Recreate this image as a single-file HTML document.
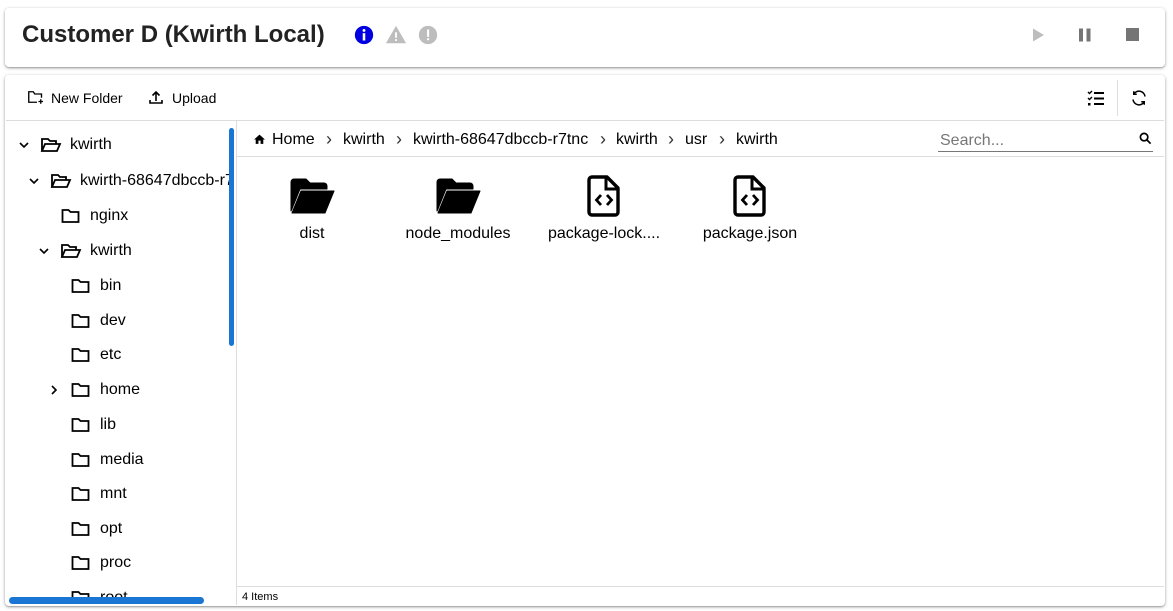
<!DOCTYPE html>
<html><head><meta charset="utf-8"><style>
*{box-sizing:border-box;margin:0;padding:0}
body{width:1173px;height:611px;background:#fff;font-family:"Liberation Sans",Arial,sans-serif;color:#000;position:relative;overflow:hidden}
.card{position:absolute;background:#fff;border-radius:4px;box-shadow:0 1px 3px rgba(0,0,0,.35),0 1px 1px rgba(0,0,0,.14)}
.abs{position:absolute}
.t{position:absolute;font-size:16px;white-space:nowrap;line-height:18px}
.row svg{position:absolute}
.ch{position:absolute;font-size:18px;line-height:18px;color:#333}
</style></head><body>
<div class="card" style="left:5px;top:8px;width:1160px;height:59px"></div>
<div class="t" style="left:22px;top:21px;font-size:24px;line-height:28px;font-weight:bold;color:#222">Customer D (Kwirth Local)</div>
<svg class="abs" style="left:353px;top:24px" width="22" height="22" viewBox="0 0 24 24"><circle cx="12" cy="12" r="10" fill="#0000e0"/><rect x="10.6" y="10" width="2.8" height="8" fill="#fff"/><circle cx="12" cy="7" r="1.6" fill="#fff"/></svg>
<svg class="abs" style="left:385px;top:24px" width="22" height="22" viewBox="0 0 24 24"><path d="M1 21h22L12 2z" fill="#bdbdbd"/><rect x="11" y="9" width="2" height="6" fill="#fff"/><rect x="11" y="16.5" width="2" height="2" fill="#fff"/></svg>
<svg class="abs" style="left:417px;top:24px" width="22" height="22" viewBox="0 0 24 24"><circle cx="12" cy="12" r="10" fill="#bdbdbd"/><rect x="11" y="6" width="2.2" height="8" fill="#fff"/><rect x="11" y="15.5" width="2.2" height="2.2" fill="#fff"/></svg>
<svg class="abs" style="left:1030px;top:27px" width="16" height="16" viewBox="0 0 16 16"><path d="M3 1.5v13L14 8z" fill="#bdbdbd"/></svg>
<svg class="abs" style="left:1077px;top:27px" width="16" height="16" viewBox="0 0 16 16"><rect x="2" y="1.5" width="4" height="13" fill="#757575"/><rect x="9.5" y="1.5" width="4" height="13" fill="#757575"/></svg>
<svg class="abs" style="left:1126px;top:28px" width="14" height="14"><rect width="13" height="13" fill="#757575"/></svg>

<div class="card" style="left:5px;top:75px;width:1160px;height:531px"></div>
<div class="abs" style="left:6px;top:120px;width:1158px;height:1px;background:#ddd"></div>
<svg class="abs" style="left:26px;top:88px" width="19" height="18" viewBox="0 0 24 24" fill="none" stroke="#000" stroke-width="1.8"><path d="M20 13V8H11L9 5H3v14h11"/><path d="M19 15v6M16 18h6"/></svg>
<div class="t" style="left:51px;top:89px;font-size:14px">New Folder</div>
<svg class="abs" style="left:148px;top:89px" width="16" height="16" viewBox="0 0 16 16" fill="none" stroke="#000" stroke-width="1.6"><path d="M8 12V3M4.5 6.5 8 3l3.5 3.5M2 11v3h12v-3"/></svg>
<div class="t" style="left:172px;top:89px;font-size:14px">Upload</div>
<svg class="abs" style="left:1086px;top:88px" width="20" height="20" viewBox="0 0 20 20"><path d="M2 4l1.5 1.5L6 3M2 10l1.5 1.5L6 9" stroke="#000" stroke-width="1.4" fill="none"/><rect x="2" y="15" width="2.5" height="2.5" fill="#000"/><rect x="8" y="4" width="10" height="2" fill="#000"/><rect x="8" y="9.5" width="10" height="2" fill="#000"/><rect x="8" y="15" width="10" height="2" fill="#000"/></svg>
<div class="abs" style="left:1117px;top:80px;width:1px;height:36px;background:#ddd"></div>
<svg class="abs" style="left:1130px;top:89px" width="18" height="18" viewBox="0 0 24 24" fill="none" stroke="#000" stroke-width="2"><path d="M20 10A8 8 0 0 0 5 7M4 14a8 8 0 0 0 15 3"/><path d="M5 3v4h4M19 21v-4h-4"/></svg>

<div class="abs" style="left:236px;top:121px;width:1px;height:484px;background:#ddd"></div>
<div class="abs" style="left:6px;top:121px;width:223px;height:476px;overflow:hidden">
<div class="row" style="position:relative">
<svg style="left:12px;top:18px" width="12" height="12" viewBox="0 0 12 12"><path d="M2 4l4 4 4-4" stroke="#000" stroke-width="1.6" fill="none"/></svg>
<svg style="left:34px;top:15px" width="22" height="18" viewBox="0 0 22 18" fill="none" stroke="#000" stroke-width="1.8"><path d="M2 15V3h6l2 2h6v3"/><path d="M2 15l3-7h15l-3 7z"/></svg>
<div class="t" style="left:64px;top:15px">kwirth</div>
<svg style="left:22px;top:54px" width="12" height="12" viewBox="0 0 12 12"><path d="M2 4l4 4 4-4" stroke="#000" stroke-width="1.6" fill="none"/></svg>
<svg style="left:44px;top:51px" width="22" height="18" viewBox="0 0 22 18" fill="none" stroke="#000" stroke-width="1.8"><path d="M2 15V3h6l2 2h6v3"/><path d="M2 15l3-7h15l-3 7z"/></svg>
<div class="t" style="left:74px;top:51px">kwirth-68647dbccb-r7tnc</div>
<svg style="left:55px;top:87px" width="19" height="16" viewBox="0 0 19 16" fill="none" stroke="#000" stroke-width="1.8"><path d="M1.5 14V2h6l2 2h8v10z"/></svg>
<div class="t" style="left:84px;top:86px">nginx</div>
<svg style="left:32px;top:124px" width="12" height="12" viewBox="0 0 12 12"><path d="M2 4l4 4 4-4" stroke="#000" stroke-width="1.6" fill="none"/></svg>
<svg style="left:54px;top:121px" width="22" height="18" viewBox="0 0 22 18" fill="none" stroke="#000" stroke-width="1.8"><path d="M2 15V3h6l2 2h6v3"/><path d="M2 15l3-7h15l-3 7z"/></svg>
<div class="t" style="left:84px;top:121px">kwirth</div>
</div>
<svg class="abs" style="left:42px;top:263px" width="12" height="12" viewBox="0 0 12 12"><path d="M4 2l4 4-4 4" stroke="#000" stroke-width="1.6" fill="none"/></svg>
<svg class="abs" style="left:65px;top:157px" width="19" height="16" viewBox="0 0 19 16" fill="none" stroke="#000" stroke-width="1.8"><path d="M1.5 14V2h6l2 2h8v10z"/></svg>
<div class="t" style="left:94px;top:156px">bin</div>
<svg class="abs" style="left:65px;top:192px" width="19" height="16" viewBox="0 0 19 16" fill="none" stroke="#000" stroke-width="1.8"><path d="M1.5 14V2h6l2 2h8v10z"/></svg>
<div class="t" style="left:94px;top:191px">dev</div>
<svg class="abs" style="left:65px;top:226px" width="19" height="16" viewBox="0 0 19 16" fill="none" stroke="#000" stroke-width="1.8"><path d="M1.5 14V2h6l2 2h8v10z"/></svg>
<div class="t" style="left:94px;top:225px">etc</div>
<svg class="abs" style="left:65px;top:261px" width="19" height="16" viewBox="0 0 19 16" fill="none" stroke="#000" stroke-width="1.8"><path d="M1.5 14V2h6l2 2h8v10z"/></svg>
<div class="t" style="left:94px;top:260px">home</div>
<svg class="abs" style="left:65px;top:296px" width="19" height="16" viewBox="0 0 19 16" fill="none" stroke="#000" stroke-width="1.8"><path d="M1.5 14V2h6l2 2h8v10z"/></svg>
<div class="t" style="left:94px;top:295px">lib</div>
<svg class="abs" style="left:65px;top:331px" width="19" height="16" viewBox="0 0 19 16" fill="none" stroke="#000" stroke-width="1.8"><path d="M1.5 14V2h6l2 2h8v10z"/></svg>
<div class="t" style="left:94px;top:330px">media</div>
<svg class="abs" style="left:65px;top:365px" width="19" height="16" viewBox="0 0 19 16" fill="none" stroke="#000" stroke-width="1.8"><path d="M1.5 14V2h6l2 2h8v10z"/></svg>
<div class="t" style="left:94px;top:364px">mnt</div>
<svg class="abs" style="left:65px;top:400px" width="19" height="16" viewBox="0 0 19 16" fill="none" stroke="#000" stroke-width="1.8"><path d="M1.5 14V2h6l2 2h8v10z"/></svg>
<div class="t" style="left:94px;top:399px">opt</div>
<svg class="abs" style="left:65px;top:434px" width="19" height="16" viewBox="0 0 19 16" fill="none" stroke="#000" stroke-width="1.8"><path d="M1.5 14V2h6l2 2h8v10z"/></svg>
<div class="t" style="left:94px;top:433px">proc</div>
<svg class="abs" style="left:65px;top:469px" width="19" height="16" viewBox="0 0 19 16" fill="none" stroke="#000" stroke-width="1.8"><path d="M1.5 14V2h6l2 2h8v10z"/></svg>
<div class="t" style="left:94px;top:468px">root</div>
</div>
<div class="abs" style="left:229px;top:128px;width:5px;height:218px;background:#1976d2;border-radius:3px"></div>
<div class="abs" style="left:9px;top:597px;width:195px;height:7px;background:#1976d2;border-radius:4px"></div>

<div class="abs" style="left:237px;top:156px;width:927px;height:1px;background:#ddd"></div>
<svg class="abs" style="left:253px;top:133px" width="13" height="13" viewBox="0 0 24 24"><path d="M10 20v-6h4v6h5v-8h3L12 3 2 12h3v8z" fill="#000"/></svg>
<div class="t" style="left:272px;top:131px">Home</div>
<div class="ch" style="left:326px;top:130px">›</div>
<div class="t" style="left:343px;top:131px">kwirth</div>
<div class="ch" style="left:396px;top:130px">›</div>
<div class="t" style="left:413px;top:131px">kwirth-68647dbccb-r7tnc</div>
<div class="ch" style="left:600px;top:130px">›</div>
<div class="t" style="left:616px;top:131px">kwirth</div>
<div class="ch" style="left:668px;top:130px">›</div>
<div class="t" style="left:685px;top:131px">usr</div>
<div class="ch" style="left:719px;top:130px">›</div>
<div class="t" style="left:736px;top:131px">kwirth</div>
<div class="t" style="left:940px;top:132px;color:#777">Search...</div>
<div class="abs" style="left:938px;top:151px;width:215px;height:1px;background:#777"></div>
<svg class="abs" style="left:1139px;top:132px" width="13" height="13" viewBox="0 0 14 14" fill="none" stroke="#000" stroke-width="1.8"><circle cx="5.5" cy="5.5" r="4"/><path d="M8.5 8.5l4 4"/></svg>

<svg class="abs" style="left:288px;top:176px" width="48" height="40" viewBox="0 0 48 40"><path d="M3 35V6a3 3 0 0 1 3-3h12l4 4h14a3 3 0 0 1 3 3v3H12L4 33z M4 37L13 15h33L37 37z" fill="#000" stroke="#000" stroke-width="1" stroke-linejoin="round"/></svg>
<div class="t" style="left:262px;top:225px;width:100px;text-align:center">dist</div>
<svg class="abs" style="left:434px;top:176px" width="48" height="40" viewBox="0 0 48 40"><path d="M3 35V6a3 3 0 0 1 3-3h12l4 4h14a3 3 0 0 1 3 3v3H12L4 33z M4 37L13 15h33L37 37z" fill="#000" stroke="#000" stroke-width="1" stroke-linejoin="round"/></svg>
<div class="t" style="left:398px;top:225px;width:120px;text-align:center">node_modules</div>
<svg class="abs" style="left:587px;top:175px" width="34" height="42" viewBox="0 0 34 42"><path d="M5 2h15l11 11v24a3 3 0 0 1-3 3H5a3 3 0 0 1-3-3V5a3 3 0 0 1 3-3z" fill="none" stroke="#000" stroke-width="3.4" stroke-linejoin="round"/><path d="M19 2v12h12" fill="none" stroke="#000" stroke-width="3"/><path d="M14 20l-4.5 5 4.5 5M20 20l4.5 5-4.5 5" fill="none" stroke="#000" stroke-width="2.8"/></svg>
<div class="t" style="left:544px;top:225px;width:120px;text-align:center">package-lock....</div>
<svg class="abs" style="left:733px;top:175px" width="34" height="42" viewBox="0 0 34 42"><path d="M5 2h15l11 11v24a3 3 0 0 1-3 3H5a3 3 0 0 1-3-3V5a3 3 0 0 1 3-3z" fill="none" stroke="#000" stroke-width="3.4" stroke-linejoin="round"/><path d="M19 2v12h12" fill="none" stroke="#000" stroke-width="3"/><path d="M14 20l-4.5 5 4.5 5M20 20l4.5 5-4.5 5" fill="none" stroke="#000" stroke-width="2.8"/></svg>
<div class="t" style="left:690px;top:225px;width:120px;text-align:center">package.json</div>

<div class="abs" style="left:237px;top:586px;width:927px;height:1px;background:#ddd"></div>
<div class="t" style="left:242px;top:591px;font-size:11px;line-height:13px">4 Items</div>
</body></html>
